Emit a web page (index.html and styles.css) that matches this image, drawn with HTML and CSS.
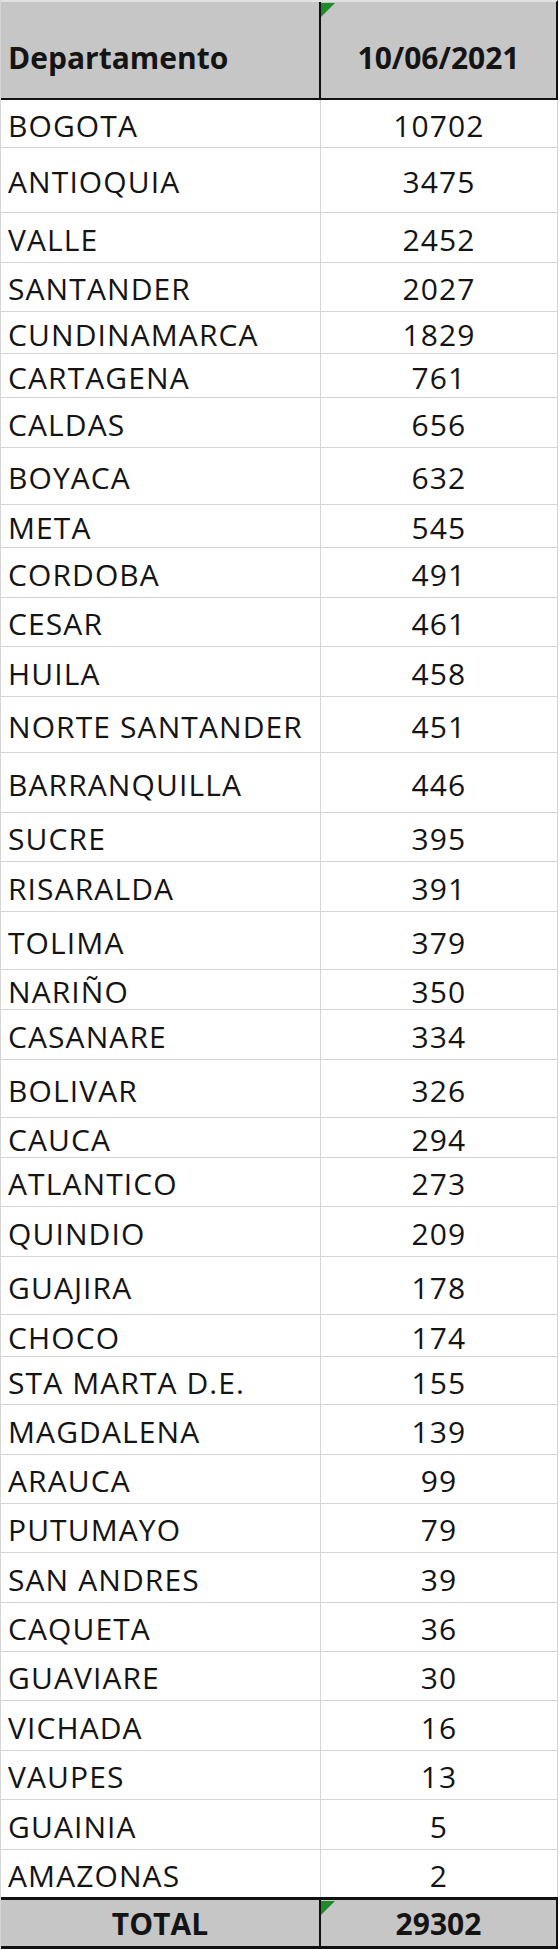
FILE: index.html
```html
<!DOCTYPE html>
<html lang="es">
<head>
<meta charset="utf-8">
<title>Departamento 10/06/2021</title>
<link rel="stylesheet" href="styles.css">
</head>
<body>
<div class="sheet">
  <div class="row head">
    <div class="cell name">Departamento</div>
    <div class="cell val"><span class="flag"></span>10/06/2021</div>
  </div>
  <div class="row h48"><div class="cell name">BOGOTA</div><div class="cell val">10702</div></div>
  <div class="row h65"><div class="cell name">ANTIOQUIA</div><div class="cell val">3475</div></div>
  <div class="row h50"><div class="cell name">VALLE</div><div class="cell val">2452</div></div>
  <div class="row h49"><div class="cell name">SANTANDER</div><div class="cell val">2027</div></div>
  <div class="row h42"><div class="cell name">CUNDINAMARCA</div><div class="cell val">1829</div></div>
  <div class="row h44"><div class="cell name">CARTAGENA</div><div class="cell val">761</div></div>
  <div class="row h50"><div class="cell name">CALDAS</div><div class="cell val">656</div></div>
  <div class="row h57"><div class="cell name">BOYACA</div><div class="cell val">632</div></div>
  <div class="row h43"><div class="cell name">META</div><div class="cell val">545</div></div>
  <div class="row h50"><div class="cell name">CORDOBA</div><div class="cell val">491</div></div>
  <div class="row h49"><div class="cell name">CESAR</div><div class="cell val">461</div></div>
  <div class="row h50"><div class="cell name">HUILA</div><div class="cell val">458</div></div>
  <div class="row h56"><div class="cell name">NORTE SANTANDER</div><div class="cell val">451</div></div>
  <div class="row h60"><div class="cell name">BARRANQUILLA</div><div class="cell val">446</div></div>
  <div class="row h49"><div class="cell name">SUCRE</div><div class="cell val">395</div></div>
  <div class="row h50"><div class="cell name">RISARALDA</div><div class="cell val">391</div></div>
  <div class="row h58"><div class="cell name">TOLIMA</div><div class="cell val">379</div></div>
  <div class="row h40"><div class="cell name">NARIÑO</div><div class="cell val">350</div></div>
  <div class="row h50"><div class="cell name">CASANARE</div><div class="cell val">334</div></div>
  <div class="row h58"><div class="cell name">BOLIVAR</div><div class="cell val">326</div></div>
  <div class="row h40"><div class="cell name">CAUCA</div><div class="cell val">294</div></div>
  <div class="row h49"><div class="cell name">ATLANTICO</div><div class="cell val">273</div></div>
  <div class="row h50"><div class="cell name">QUINDIO</div><div class="cell val">209</div></div>
  <div class="row h58"><div class="cell name">GUAJIRA</div><div class="cell val">178</div></div>
  <div class="row h42"><div class="cell name">CHOCO</div><div class="cell val">174</div></div>
  <div class="row h48"><div class="cell name">STA MARTA D.E.</div><div class="cell val">155</div></div>
  <div class="row h50"><div class="cell name">MAGDALENA</div><div class="cell val">139</div></div>
  <div class="row h49"><div class="cell name">ARAUCA</div><div class="cell val">99</div></div>
  <div class="row h49"><div class="cell name">PUTUMAYO</div><div class="cell val">79</div></div>
  <div class="row h50"><div class="cell name">SAN ANDRES</div><div class="cell val">39</div></div>
  <div class="row h49"><div class="cell name">CAQUETA</div><div class="cell val">36</div></div>
  <div class="row h49"><div class="cell name">GUAVIARE</div><div class="cell val">30</div></div>
  <div class="row h50"><div class="cell name">VICHADA</div><div class="cell val">16</div></div>
  <div class="row h49"><div class="cell name">VAUPES</div><div class="cell val">13</div></div>
  <div class="row h50"><div class="cell name">GUAINIA</div><div class="cell val">5</div></div>
  <div class="row h47 last"><div class="cell name">AMAZONAS</div><div class="cell val">2</div></div>
  <div class="row total">
    <div class="cell name">TOTAL</div>
    <div class="cell val"><span class="flag"></span>29302</div>
  </div>
</div>
</body>
</html>
```

FILE: styles.css
```css
html, body {
  margin: 0;
  padding: 0;
  background: #ffffff;
}

.sheet {
  width: 558px;
  font-family: "Open Sans", "Liberation Sans", sans-serif;
  font-size: 30px;
  color: #141414;
  border-left: 1px solid #d6d6d6;
  box-sizing: border-box;
}

.row {
  display: grid;
  grid-template-columns: 320px 1fr;
  box-sizing: border-box;
  border-bottom: 1px solid #d4d4d4;
  border-right: 1px solid #d4d4d4;
  letter-spacing: 1.1px;
}

.cell {
  display: flex;
  align-items: center;
  box-sizing: border-box;
  padding-top: 4px;
  line-height: 1;
  white-space: nowrap;
}

.name {
  padding-left: 7px;
  border-right: 1px solid #d4d4d4;
}

.val {
  justify-content: center;
  position: relative;
}

.head {
  height: 100px;
  background: #c6c6c6;
  border-top: 2px solid #e2e2e2;
  border-bottom: 2px solid #111111;
  border-right: 2px solid #111111;
  font-weight: 700;
  letter-spacing: 0;
}

.head .cell {
  padding-top: 16px;
}

.head .name,
.total .name {
  border-right: 2px solid #111111;
}

.total {
  height: 52px;
  background: #c6c6c6;
  border-top: 3px solid #111111;
  border-bottom: 3px solid #111111;
  border-right: 2px solid #111111;
  font-weight: 700;
  letter-spacing: 0;
}

.total .cell {
  padding-top: 2px;
}

.total .name {
  justify-content: center;
  padding-left: 0;
}

.last {
  border-bottom: none;
}

.flag {
  position: absolute;
  left: 0;
  top: 1px;
  width: 0;
  height: 0;
  border-top: 14px solid #1f8a2a;
  border-right: 14px solid transparent;
}

.h40 { height: 40px; }
.h42 { height: 42px; }
.h43 { height: 43px; }
.h44 { height: 44px; }
.h47 { height: 47px; }
.h48 { height: 48px; }
.h49 { height: 49px; }
.h50 { height: 50px; }
.h56 { height: 56px; }
.h57 { height: 57px; }
.h58 { height: 58px; }
.h60 { height: 60px; }
.h65 { height: 65px; }
```
